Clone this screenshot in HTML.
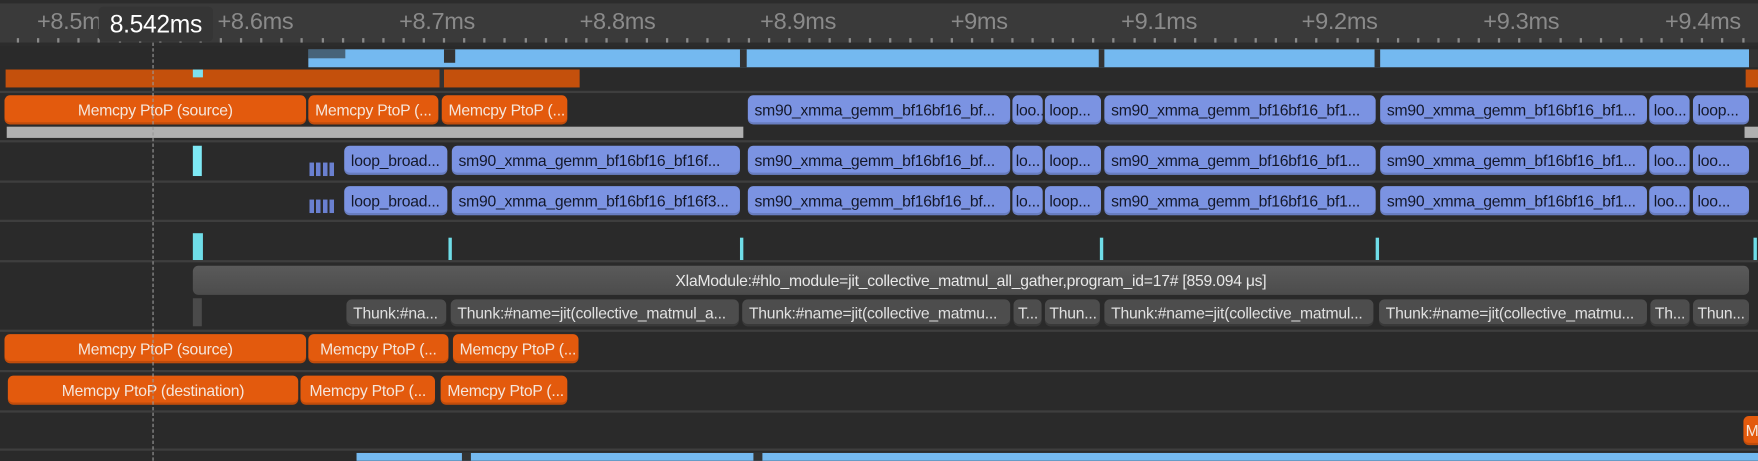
<!DOCTYPE html>
<html><head><meta charset="utf-8"><style>
html,body{margin:0;padding:0;background:#2a2a2a;overflow:hidden;width:1758px;height:460px}
#w{position:absolute;left:0;top:0;width:1568px;height:411px;transform:scale(1.12117);transform-origin:0 0;font-family:"Liberation Sans",sans-serif;background:#2a2a2a}
.a{position:absolute}
.r{position:absolute;left:0;width:1568px;height:2px;background:#3e3e3e}
.s{position:absolute;box-sizing:border-box;border-radius:5px;font-size:14px;letter-spacing:-0.2px;line-height:26px;height:26px;white-space:nowrap;overflow:hidden;padding:0 6px;}
.o{background:#e35a0d;color:#f5e6dc;text-align:center;box-shadow:inset 0 -2px 0 rgba(0,0,0,.15)}
.b{background:#7b93e2;color:#14182a;box-shadow:inset 0 -2px 0 rgba(0,0,0,.15)}
.t{background:#4d4d4d;color:#e0e0e0;box-shadow:inset 0 -2px 0 rgba(0,0,0,.25);height:24px;line-height:24px}
.lb{position:absolute;top:8px;font-size:21px;letter-spacing:-0.3px;color:#8a8a8a}
.tk{position:absolute;top:34px;width:2px;height:4px;background:#8a8a8a}
</style></head><body><div id="w">
<div class="a" style="left:0;top:0;width:1568px;height:38px;background:#3a3a3a"></div>
<div class="a" style="left:0;top:0;width:1568px;height:3px;background:#2c2c2c"></div>
<div class="a" style="left:0;top:38px;width:1568px;height:3px;background:#2c2c2c"></div>
<div class="lb" style="left:33px">+8.5ms</div>
<div class="lb" style="left:194px">+8.6ms</div>
<div class="lb" style="left:356px">+8.7ms</div>
<div class="lb" style="left:517px">+8.8ms</div>
<div class="lb" style="left:678px">+8.9ms</div>
<div class="lb" style="left:848px">+9ms</div>
<div class="lb" style="left:1000px">+9.1ms</div>
<div class="lb" style="left:1161px">+9.2ms</div>
<div class="lb" style="left:1323px">+9.3ms</div>
<div class="lb" style="left:1485px">+9.4ms</div>
<div id="ticks"></div>
<div class="a" style="left:88px;top:6px;width:102px;height:31px;background:#353535;border-radius:4px;color:#fff;font-size:22px;letter-spacing:-0.3px;line-height:31px;text-align:center">8.542ms</div>

<div class="a" style="left:275px;top:44px;width:1285px;height:16px;background:#74b9f0"></div>
<div class="a" style="left:275px;top:44px;width:33px;height:8px;background:#2a2a2a;opacity:.6"></div>
<div class="a" style="left:396px;top:44px;width:10px;height:12px;background:#333"></div>
<div class="a" style="left:660px;top:44px;width:6px;height:16px;background:#333"></div>
<div class="a" style="left:980px;top:44px;width:5px;height:16px;background:#333"></div>
<div class="a" style="left:1226px;top:44px;width:5px;height:16px;background:#333"></div>
<div class="a" style="left:1560px;top:44px;width:8px;height:16px;background:#333"></div>
<div class="a" style="left:5px;top:62px;width:512px;height:16px;background:#c4500c"></div>
<div class="a" style="left:392px;top:62px;width:4px;height:16px;background:#333"></div>
<div class="a" style="left:172px;top:62px;width:9px;height:7px;background:#7ee0ee"></div>
<div class="a" style="left:1557px;top:62px;width:11px;height:16px;background:#c4500c"></div>
<div class="r" style="top:81px"></div>

<div class="s o" style="left:4px;top:85px;width:269px">Memcpy PtoP (source)</div>
<div class="s o" style="left:275px;top:85px;width:116px">Memcpy PtoP (...</div>
<div class="s o" style="left:394px;top:85px;width:112px">Memcpy PtoP (...</div>
<div class="s b" style="left:667px;top:85px;width:234px">sm90_xmma_gemm_bf16bf16_bf...</div>
<div class="s b" style="left:903px;top:85px;width:27px;padding:0 3px">loo...</div>
<div class="s b" style="left:932px;top:85px;width:50px;padding:0 4px">loop...</div>
<div class="s b" style="left:985px;top:85px;width:242px">sm90_xmma_gemm_bf16bf16_bf1...</div>
<div class="s b" style="left:1231px;top:85px;width:238px">sm90_xmma_gemm_bf16bf16_bf1...</div>
<div class="s b" style="left:1471px;top:85px;width:36px;padding:0 4px">loo...</div>
<div class="s b" style="left:1510px;top:85px;width:50px;padding:0 4px">loop...</div>
<div class="a" style="left:6px;top:113px;width:657px;height:10px;background:#b0b0b0"></div>
<div class="a" style="left:1556px;top:113px;width:12px;height:10px;background:#b0b0b0"></div>
<div class="r" style="top:125px"></div>

<div class="a" style="left:172px;top:130px;width:8px;height:27px;background:#7ee9f5"></div>
<div class="a" style="left:276px;top:145px;width:24px;height:12px;background:repeating-linear-gradient(90deg,#6a80d0 0 4px,transparent 4px 6px)"></div>
<div class="s b" style="left:307px;top:130px;width:92px">loop_broad...</div>
<div class="s b" style="left:403px;top:130px;width:257px">sm90_xmma_gemm_bf16bf16_bf16f...</div>
<div class="s b" style="left:667px;top:130px;width:234px">sm90_xmma_gemm_bf16bf16_bf...</div>
<div class="s b" style="left:903px;top:130px;width:27px;padding:0 3px">lo...</div>
<div class="s b" style="left:932px;top:130px;width:50px;padding:0 4px">loop...</div>
<div class="s b" style="left:985px;top:130px;width:242px">sm90_xmma_gemm_bf16bf16_bf1...</div>
<div class="s b" style="left:1231px;top:130px;width:238px">sm90_xmma_gemm_bf16bf16_bf1...</div>
<div class="s b" style="left:1471px;top:130px;width:36px;padding:0 4px">loo...</div>
<div class="s b" style="left:1510px;top:130px;width:50px;padding:0 4px">loo...</div>
<div class="r" style="top:161px"></div>

<div class="a" style="left:276px;top:178px;width:24px;height:12px;background:repeating-linear-gradient(90deg,#6a80d0 0 4px,transparent 4px 6px)"></div>
<div class="s b" style="left:307px;top:166px;width:92px">loop_broad...</div>
<div class="s b" style="left:403px;top:166px;width:257px">sm90_xmma_gemm_bf16bf16_bf16f3...</div>
<div class="s b" style="left:667px;top:166px;width:234px">sm90_xmma_gemm_bf16bf16_bf...</div>
<div class="s b" style="left:903px;top:166px;width:27px;padding:0 3px">lo...</div>
<div class="s b" style="left:932px;top:166px;width:50px;padding:0 4px">loop...</div>
<div class="s b" style="left:985px;top:166px;width:242px">sm90_xmma_gemm_bf16bf16_bf1...</div>
<div class="s b" style="left:1231px;top:166px;width:238px">sm90_xmma_gemm_bf16bf16_bf1...</div>
<div class="s b" style="left:1471px;top:166px;width:36px;padding:0 4px">loo...</div>
<div class="s b" style="left:1510px;top:166px;width:50px;padding:0 4px">loo...</div>
<div class="r" style="top:196px"></div>

<div class="a" style="left:172px;top:208px;width:9px;height:24px;background:#6fdde8"></div>
<div class="a" style="left:400px;top:212px;width:3px;height:20px;background:#6fdde8"></div>
<div class="a" style="left:660px;top:212px;width:3px;height:20px;background:#6fdde8"></div>
<div class="a" style="left:981px;top:212px;width:3px;height:20px;background:#6fdde8"></div>
<div class="a" style="left:1227px;top:212px;width:3px;height:20px;background:#6fdde8"></div>
<div class="a" style="left:1564px;top:212px;width:3px;height:20px;background:#6fdde8"></div>
<div class="r" style="top:232px"></div>

<div class="s" style="left:172px;top:237px;width:1388px;height:26px;background:linear-gradient(#5a5a5a,#4c4c4c);color:#e8e8e8;text-align:center;font-size:14px">XlaModule:#hlo_module=jit_collective_matmul_all_gather,program_id=17# [859.094 μs]</div>
<div class="a" style="left:172px;top:266px;width:8px;height:25px;background:#4a4a4a"></div>
<div class="s t" style="left:309px;top:267px;width:89px">Thunk:#na...</div>
<div class="s t" style="left:402px;top:267px;width:257px">Thunk:#name=jit(collective_matmul_a...</div>
<div class="s t" style="left:662px;top:267px;width:239px">Thunk:#name=jit(collective_matmu...</div>
<div class="s t" style="left:904px;top:267px;width:25px;padding:0 4px">T...</div>
<div class="s t" style="left:932px;top:267px;width:49px;padding:0 4px">Thun...</div>
<div class="s t" style="left:985px;top:267px;width:240px">Thunk:#name=jit(collective_matmul...</div>
<div class="s t" style="left:1230px;top:267px;width:239px">Thunk:#name=jit(collective_matmu...</div>
<div class="s t" style="left:1472px;top:267px;width:35px;padding:0 4px">Th...</div>
<div class="s t" style="left:1510px;top:267px;width:50px;padding:0 4px">Thun...</div>
<div class="r" style="top:294px"></div>

<div class="s o" style="left:4px;top:298px;width:269px">Memcpy PtoP (source)</div>
<div class="s o" style="left:275px;top:298px;width:125px">Memcpy PtoP (...</div>
<div class="s o" style="left:404px;top:298px;width:112px">Memcpy PtoP (...</div>
<div class="r" style="top:330px"></div>
<div class="s o" style="left:7px;top:335px;width:259px">Memcpy PtoP (destination)</div>
<div class="s o" style="left:268px;top:335px;width:120px">Memcpy PtoP (...</div>
<div class="s o" style="left:393px;top:335px;width:113px">Memcpy PtoP (...</div>
<div class="r" style="top:366px"></div>
<div class="s o" style="left:1555px;top:371px;width:20px;padding:0 2px;text-align:left">M</div>
<div class="r" style="top:400px"></div>
<div class="a" style="left:318px;top:404px;width:1250px;height:7px;background:#74b9f0"></div>
<div class="a" style="left:412px;top:404px;width:8px;height:7px;background:#333"></div>
<div class="a" style="left:672px;top:404px;width:8px;height:7px;background:#333"></div>
<div class="a" style="left:136px;top:38px;width:0;height:373px;border-left:1px dashed #9a9a9a"></div>
</div>
<script>
var h='';for(var x=15;x<1568;x+=18.1){h+='<div class="tk" style="left:'+x.toFixed(1)+'px"></div>'}
document.getElementById('ticks').innerHTML=h;
</script>
</body></html>
